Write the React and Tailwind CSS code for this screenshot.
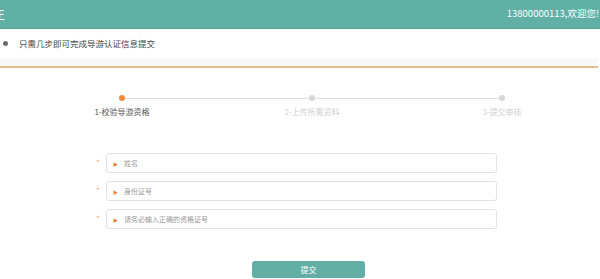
import React from "react";

const font = { fontFamily: '"Noto Sans CJK SC", "Noto Sans", sans-serif' };

const steps = [
  { label: "1-校验导游资格", active: true },
  { label: "2-上传所需资料", active: false },
  { label: "3-提交审核", active: false },
];

const fields = ["姓名", "身份证号", "请务必输入正确的资格证号"];

const App = () => {
  return (
    <div className="w-[600px] h-[279px] overflow-hidden bg-white font-['Noto_Sans_CJK_SC',sans-serif]">
      {/* Header */}
      <div className="h-[29px] bg-[#60b0a6] border-b border-[#58a298] flex items-center justify-between text-white">
        <span className="text-[11px] -ml-[6px] leading-none">王</span>
        <span className="text-[9.5px] pr-[1px] leading-none">13800000113,欢迎您!</span>
      </div>

      {/* Title */}
      <div className="h-[29px] flex items-center pl-[3px]">
        <div className="w-[5px] h-[5px] rounded-full bg-[#6b6b6b]"></div>
        <span className="ml-[11px] text-[8.5px] text-[#444]">只需几步即可完成导游认证信息提交</span>
      </div>
      <div className="h-[8px] bg-[#f8f8f8] mr-[2px]"></div>
      <div className="h-[2px] bg-[#e2bd90] mr-[2px]"></div>

      {/* Steps */}
      <div className="ml-[27px] w-[570px] grid grid-cols-3 mt-[27px]">
        {steps.map((s, i) => (
          <div key={i} className="flex flex-col items-center">
            <div className="w-full flex items-center">
              <div className={"flex-1 h-[1px] " + (i === 0 ? "bg-transparent" : "bg-[#dedede]")}></div>
              <div className={"w-[6px] h-[6px] rounded-full " + (s.active ? "bg-[#f08a3c]" : "bg-[#d6d6d6]")}></div>
              <div className={"flex-1 h-[1px] " + (i === 2 ? "bg-transparent" : "bg-[#dedede]")}></div>
            </div>
            <span className={"mt-[5px] text-[8px] leading-[12px] " + (s.active ? "text-[#555]" : "text-[#d0d0d0]")}>
              {s.label}
            </span>
          </div>
        ))}
      </div>

      {/* Form */}
      <div className="mt-[35px] flex flex-col gap-[8px] pl-[96px]">
        {fields.map((f, i) => (
          <div key={i} className="flex items-center">
            <span className="w-[10px] text-[8px] text-[#f0a878] leading-none">*</span>
            <div className="w-[391px] h-[20px] border border-[#e3e3e3] rounded-[3px] flex items-center pl-[6px]">
              <span className="text-[5px] text-[#e8823a] leading-none">▶</span>
              <span className="ml-[6px] text-[7px] text-[#999] leading-none">{f}</span>
            </div>
          </div>
        ))}
      </div>

      {/* Submit */}
      <div className="mt-[32px] ml-[252px] w-[113px] h-[17px] rounded-[3px] bg-[#62aea4] flex items-center justify-center">
        <span className="text-[8px] text-white leading-none">提交</span>
      </div>
    </div>
  );
};

export default App;
